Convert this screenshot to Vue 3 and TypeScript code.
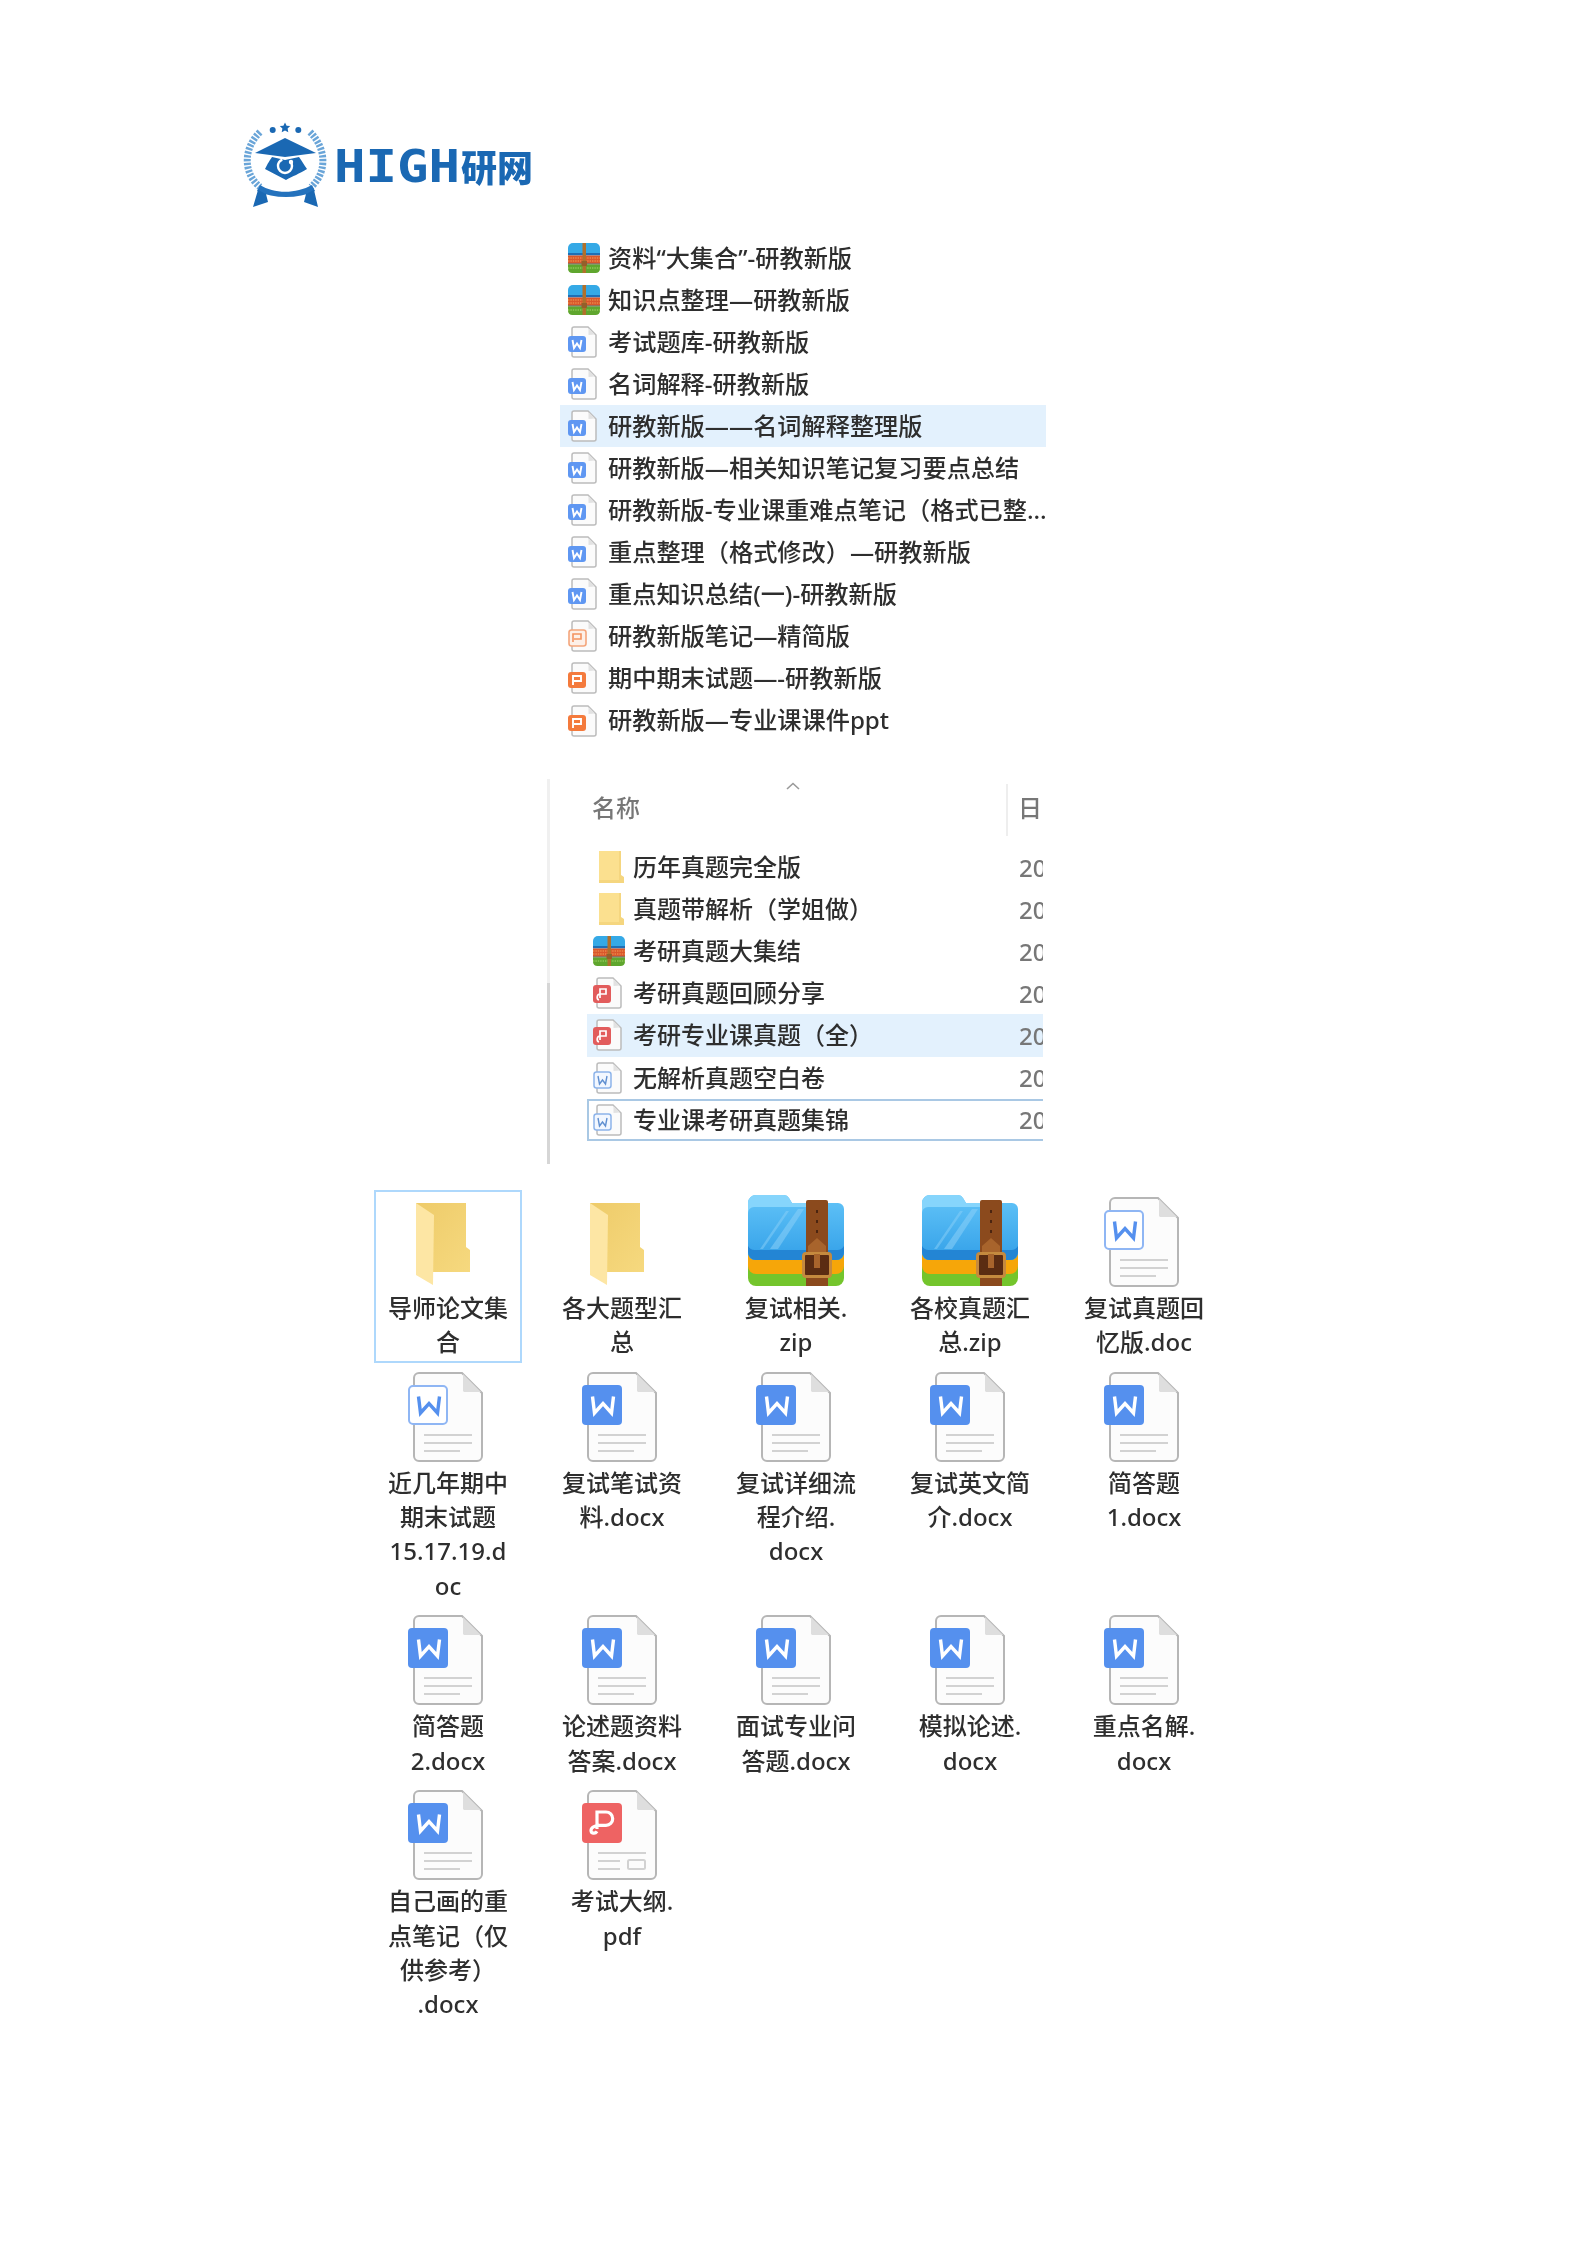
<script setup lang="ts">
interface Row {
  icon: string
  name: string
}

interface Tile {
  icon: string
  lines: string[]
  selected?: boolean
}

const topFiles: Row[] = [
  { icon: 'rar-s', name: '资料“大集合”-研教新版' },
  { icon: 'rar-s', name: '知识点整理—研教新版' },
  { icon: 'word-s', name: '考试题库-研教新版' },
  { icon: 'word-s', name: '名词解释-研教新版' },
  { icon: 'word-s', name: '研教新版——名词解释整理版' },
  { icon: 'word-s', name: '研教新版—相关知识笔记复习要点总结' },
  { icon: 'word-s', name: '研教新版-专业课重难点笔记（格式已整...' },
  { icon: 'word-s', name: '重点整理（格式修改）—研教新版' },
  { icon: 'word-s', name: '重点知识总结(一)-研教新版' },
  { icon: 'ppt-line-s', name: '研教新版笔记—精简版' },
  { icon: 'ppt-s', name: '期中期末试题—-研教新版' },
  { icon: 'ppt-s', name: '研教新版—专业课课件ppt' }
]

const examFiles: Row[] = [
  { icon: 'folder-s', name: '历年真题完全版' },
  { icon: 'folder-s', name: '真题带解析（学姐做）' },
  { icon: 'rar-s', name: '考研真题大集结' },
  { icon: 'pdf-s', name: '考研真题回顾分享' },
  { icon: 'pdf-s', name: '考研专业课真题（全）' },
  { icon: 'word-line-s', name: '无解析真题空白卷' },
  { icon: 'word-line-s', name: '专业课考研真题集锦' }
]

const tiles: Tile[] = [
  { icon: 'folder-b', lines: ['导师论文集', '合'], selected: true },
  { icon: 'folder-b', lines: ['各大题型汇', '总'] },
  { icon: 'zip-b', lines: ['复试相关.', 'zip'] },
  { icon: 'zip-b', lines: ['各校真题汇', '总.zip'] },
  { icon: 'word-line-b', lines: ['复试真题回', '忆版.doc'] },
  { icon: 'word-line-b', lines: ['近几年期中', '期末试题', '15.17.19.d', 'oc'] },
  { icon: 'word-b', lines: ['复试笔试资', '料.docx'] },
  { icon: 'word-b', lines: ['复试详细流', '程介绍.', 'docx'] },
  { icon: 'word-b', lines: ['复试英文简', '介.docx'] },
  { icon: 'word-b', lines: ['简答题', '1.docx'] },
  { icon: 'word-b', lines: ['简答题', '2.docx'] },
  { icon: 'word-b', lines: ['论述题资料', '答案.docx'] },
  { icon: 'word-b', lines: ['面试专业问', '答题.docx'] },
  { icon: 'word-b', lines: ['模拟论述.', 'docx'] },
  { icon: 'word-b', lines: ['重点名解.', 'docx'] },
  { icon: 'word-b', lines: ['自己画的重', '点笔记（仅', '供参考）', '.docx'] },
  { icon: 'pdf-b', lines: ['考试大纲.', 'pdf'] }
]

// rows that carry the pale selection colour / focus frame in the second list
const hoverRow = 4
const focusRow = 6
</script>

<template>
  <div class="page" lang="zh-CN">
    <svg class="defs" aria-hidden="true">
      <defs>
        <linearGradient id="zip-blue" x1="0" y1="0" x2="0" y2="1">
          <stop offset="0" stop-color="#62c4f8" />
          <stop offset="1" stop-color="#33a0e8" />
        </linearGradient>
        <linearGradient id="folder-back" x1="0" y1="0" x2="1" y2="1">
          <stop offset="0" stop-color="#eecb69" />
          <stop offset="1" stop-color="#f6d97f" />
        </linearGradient>
        <symbol id="paper-b" viewBox="0 0 96 96">
          <path d="M19 4H62L82 24V87a5 5 0 0 1-5 5H19a5 5 0 0 1-5-5V9a5 5 0 0 1 5-5Z" fill="#fcfcfc" stroke="#b6b6b6" stroke-width="2" />
          <path d="M63 5L81 23 64 23 63 22Z" fill="#dedede" />
        </symbol>
        <symbol id="word-b" viewBox="0 0 96 96">
          <use href="#paper-b" />
          <path d="M24 66H72M24 74H72M24 82H60" stroke="#d2d2d2" stroke-width="2" fill="none" />
          <rect x="8" y="16" width="40" height="40" rx="4" fill="#5590ee" />
          <path d="M18.5 27.5L20.5 44 29 34.5 37.5 44 39.5 27.5" fill="none" stroke="#fff" stroke-width="3.4" />
        </symbol>
        <symbol id="word-line-b" viewBox="0 0 96 96">
          <use href="#paper-b" />
          <path d="M24 66H72M24 74H72M24 82H60" stroke="#d2d2d2" stroke-width="2" fill="none" />
          <rect x="9" y="17" width="38" height="38" rx="4" fill="#fff" stroke="#8fb6f4" stroke-width="2" />
          <path d="M18.5 27.5L20.5 44 29 34.5 37.5 44 39.5 27.5" fill="none" stroke="#5590ee" stroke-width="3.4" />
        </symbol>
        <symbol id="pdf-b" viewBox="0 0 96 96">
          <use href="#paper-b" />
          <path d="M24 66H72M24 74H46M24 82H46" stroke="#d2d2d2" stroke-width="2" fill="none" />
          <rect x="54" y="73" width="17" height="9" rx="1.5" fill="none" stroke="#d2d2d2" stroke-width="2" />
          <rect x="8" y="16" width="40" height="40" rx="4" fill="#ee6363" />
          <path d="M23 42V25H32a6.7 6.7 0 0 1 0 13.4H25c-4 0-8 2-8 5s4 4 6 1" fill="none" stroke="#fff" stroke-width="3.2" />
        </symbol>
        <symbol id="folder-b" viewBox="0 0 96 96">
          <path d="M16 9H66V53L70 56V78H16Z" fill="url(#folder-back)" />
          <path d="M16 9L34 21 33 91 16 81Z" fill="#fde6a4" />
        </symbol>
        <symbol id="zip-b" viewBox="0 0 96 96">
          <path d="M0 64V84a8 8 0 0 0 8 8H88a8 8 0 0 0 8-8V64Z" fill="#74c52c" />
          <path d="M0 56V72a8 8 0 0 0 8 8H88a8 8 0 0 0 8-8V56Z" fill="#f6a609" />
          <path d="M0 9a8 8 0 0 1 8-8H36a6 6 0 0 1 5 3l3 5H90a6 6 0 0 1 6 6V60a8 8 0 0 1-8 6H8a8 8 0 0 1-8-6Z" fill="url(#zip-blue)" />
          <path d="M0 52V58a8 8 0 0 0 8 8H88a8 8 0 0 0 8-8V52a8 8 0 0 1-8 4H8a8 8 0 0 1-8-4Z" fill="#2385d4" />
          <path d="M0 9a8 8 0 0 1 8-8H36a6 6 0 0 1 5 3l3 5H58V13H6a6 6 0 0 0-6 6Z" fill="#86d5fc" />
          <path d="M22 55L50 15H56L30 55Z" fill="#8ad0f7" opacity=".55" />
          <path d="M12 55L38 17H41L15 55Z" fill="#8ad0f7" opacity=".5" />
          <path d="M58 8a2 2 0 0 1 2-2H78a2 2 0 0 1 2 2V92H58Z" fill="#8b4a1d" />
          <path d="M60 52L69 44 78 52V58H60Z" fill="#a8642c" />
          <rect x="55.5" y="59.5" width="27" height="23" rx="2.5" fill="#5b2c12" stroke="#c58a3e" stroke-width="3" />
          <rect x="66" y="60" width="6" height="14" fill="#a8642c" />
          <path d="M69 16v3M69 26v3M69 36v3" stroke="#4c2510" stroke-width="2" />
        </symbol>
        <symbol id="paper-s" viewBox="0 0 32 32">
          <path d="M6 1H20L28 9V29a2 2 0 0 1-2 2H6a2 2 0 0 1-2-2V3a2 2 0 0 1 2-2Z" fill="#fbfbfb" stroke="#bcbcbc" stroke-width="1.5" />
          <path d="M20.5 2L27 8.5 20.5 9Z" fill="#e2e2e2" />
        </symbol>
        <symbol id="word-s" viewBox="0 0 32 32">
          <use href="#paper-s" />
          <rect x="0" y="10" width="18" height="16" rx="3" fill="#5f97f2" />
          <path d="M4.5 14L6 22 9 17.5 12 22 13.5 14" fill="none" stroke="#fff" stroke-width="1.9" />
        </symbol>
        <symbol id="word-line-s" viewBox="0 0 32 32">
          <use href="#paper-s" />
          <rect x="1" y="10" width="17" height="16" rx="2.5" fill="#f2f7ff" stroke="#8db4ea" stroke-width="1.5" />
          <path d="M5 14L6.5 22 9.5 18 12.5 22 14 14" fill="none" stroke="#5f8fd0" stroke-width="1.4" />
        </symbol>
        <symbol id="ppt-s" viewBox="0 0 32 32">
          <use href="#paper-s" />
          <rect x="0" y="10" width="18" height="16" rx="3" fill="#f47a3c" />
          <path d="M5 23V14H13V19H6" fill="none" stroke="#fff" stroke-width="1.9" />
        </symbol>
        <symbol id="ppt-line-s" viewBox="0 0 32 32">
          <use href="#paper-s" />
          <rect x="1" y="10" width="17" height="16" rx="2.5" fill="#fdf0e8" stroke="#f4a67c" stroke-width="1.6" />
          <path d="M5 22V14H13V19H6" fill="none" stroke="#f4935f" stroke-width="1.6" />
        </symbol>
        <symbol id="pdf-s" viewBox="0 0 32 32">
          <use href="#paper-s" />
          <rect x="0" y="8" width="18" height="18" rx="3" fill="#e25c5c" />
          <path d="M7 21V12H13V17H7C4 17 3 22 6 23" fill="none" stroke="#fff" stroke-width="1.7" />
        </symbol>
        <symbol id="folder-s" viewBox="0 0 32 32">
          <path d="M6 0H28V24L31 26V32H6Z" fill="#f5d67f" />
          <path d="M6 0H26V29H6Z" fill="#fbe08f" />
        </symbol>
        <symbol id="rar-s" viewBox="0 0 32 32">
          <path d="M0 6a5 5 0 0 1 5-5H27a5 5 0 0 1 5 5V13H0Z" fill="#35a9e6" />
          <rect x="0" y="11" width="32" height="2.5" fill="#1f6fb5" />
          <rect x="0" y="13.5" width="32" height="8" fill="#d9572b" />
          <path d="M0 16H32M0 19H32" stroke="#f2a25a" stroke-width="1.1" stroke-dasharray="1.4 1" />
          <rect x="0" y="21.5" width="32" height="1" fill="#3a3a2a" />
          <path d="M0 22.5H32V27a4.5 4.5 0 0 1-4.5 4H4.5a4.5 4.5 0 0 1-4.5-4Z" fill="#5fa62e" />
          <path d="M0 26H32" stroke="#a6d66c" stroke-width="1" stroke-dasharray="1.4 1" />
          <rect x="14.5" y="1" width="3.5" height="30" fill="#b0702c" />
          <rect x="13.5" y="19" width="5.5" height="5" fill="#94602a" />
        </symbol>
      </defs>
    </svg>

    <svg class="logo" viewBox="0 0 290 85" role="img" aria-label="HIGH研网">
      <path d="M41 0.5l1.6 3.2 3.6.4-2.6 2.5.7 3.6-3.3-1.7-3.3 1.7.7-3.6-2.6-2.5 3.6-.4Z" fill="#1a68b3" />
      <circle cx="28.7" cy="8" r="3" fill="#1a68b3" />
      <circle cx="54.3" cy="8" r="3" fill="#1a68b3" />
      <path d="M16 10C-2 28 0 52 16 65" fill="none" stroke="#6aa5d8" stroke-width="7" stroke-dasharray="2.4 1.4" />
      <path d="M66 10C84 28 82 52 67 65" fill="none" stroke="#6aa5d8" stroke-width="7" stroke-dasharray="2.4 1.4" />
      <path d="M11 31L41 16 72 31 41 35Z" fill="#1a68b3" />
      <path d="M21 47C24 41 26 38 28 35L41 38 55 35C58 39 60 43 63 47 55 52 49 54 42 58 35 54 28 51 21 47Z" fill="#1a68b3" />
      <circle cx="41" cy="44" r="7" fill="none" stroke="#fff" stroke-width="2.4" stroke-dasharray="30 8" />
      <circle cx="47" cy="40" r="2.2" fill="#fff" />
      <path d="M16 63C30 72 52 72 68 63L71 69C54 77 30 77 13 69Z" fill="#2472bd" />
      <path d="M14 68L9 85 24 80 22 72ZM70 68L74 85 60 80 62 72Z" fill="#1a68b3" />
      <text class="logo-latin" x="90" y="60" textLength="126" lengthAdjust="spacingAndGlyphs">HIGH</text>
      <text class="logo-cjk" x="217" y="60" textLength="72" lengthAdjust="spacingAndGlyphs">研网</text>
    </svg>

    <ul class="file-list">
      <li v-for="(row, i) in topFiles" :key="row.name" class="file-row" :class="{ active: i === 4 }">
        <svg class="small-icon"><use :href="`#${row.icon}`" /></svg>
        <span class="file-name">{{ row.name }}</span>
      </li>
    </ul>

    <section class="explorer">
      <header class="explorer-head">
        <span class="col-name">名称</span>
        <svg class="sort-caret" viewBox="0 0 14 8"><path d="M1 7L7 1.5 13 7" fill="none" stroke="#9a9a9a" stroke-width="1.6" /></svg>
        <span class="col-date">日</span>
      </header>
      <ul class="exam-list">
        <li
          v-for="(row, i) in examFiles"
          :key="row.name"
          class="exam-row"
          :class="{ active: i === hoverRow, focused: i === focusRow }"
        >
          <svg class="small-icon"><use :href="`#${row.icon}`" /></svg>
          <span class="file-name">{{ row.name }}</span>
          <span class="file-date">20</span>
        </li>
      </ul>
    </section>

    <div class="tile-grid">
      <div v-for="(tile, i) in tiles" :key="i" class="tile" :class="{ selected: tile.selected }">
        <svg class="big-icon"><use :href="`#${tile.icon}`" /></svg>
        <div class="tile-label">
          <div v-for="line in tile.lines" :key="line">{{ line }}</div>
        </div>
      </div>
    </div>
  </div>
</template>

<style>
html,
body {
  background: #fff;
}
</style>

<style scoped>
.page {
  width: 1587px;
  height: 2245px;
  box-sizing: border-box;
  padding-top: 122px;
  background: #fff;
  color: #2e2e2e;
  font-family: "Noto Sans", "Noto Sans CJK SC", sans-serif;
  font-size: 24px;
  font-weight: 500;
  overflow: hidden;
  filter: blur(0.5px);
}

.defs {
  display: block;
  width: 0;
  height: 0;
}

.logo {
  display: block;
  width: 290px;
  height: 85px;
  margin-left: 244px;
  overflow: visible;
}

.logo-latin {
  font-family: "DejaVu Sans Mono", monospace;
  font-weight: 700;
  font-size: 44px;
  fill: #1a68b3;
}

.logo-cjk {
  font-family: "Noto Sans CJK SC", sans-serif;
  font-weight: 900;
  font-size: 37px;
  fill: #1a68b3;
}

ul {
  list-style: none;
  margin: 0;
  padding: 0;
}

.file-list {
  width: 486px;
  margin: 30px 0 0 560px;
  font-size: 24.2px;
}

.file-row {
  display: flex;
  align-items: center;
  gap: 8px;
  height: 42.05px;
  padding-left: 8px;
  white-space: nowrap;
}

.active {
  background: #e3f1fd;
}

.small-icon {
  flex: none;
  width: 32px;
  height: 32px;
}

.file-name {
  line-height: 1;
}

.explorer {
  width: 496px;
  height: 385px;
  box-sizing: border-box;
  margin: 37px 0 0 547px;
  border-left: 3px solid;
  border-image: linear-gradient(#f0f0f0 53%, #d6d6d6 53%) 1;
  overflow: hidden;
}

.explorer-head {
  position: relative;
  display: flex;
  justify-content: space-between;
  align-items: center;
  box-sizing: border-box;
  height: 67.5px;
  padding: 0 1px 12px 42px;
  color: #777;
}

.sort-caret {
  position: absolute;
  left: 236px;
  top: 3px;
  width: 14px;
  height: 8px;
}

.col-date {
  align-self: flex-start;
  width: 36px;
  height: 52px;
  box-sizing: border-box;
  margin-top: 5px;
  padding-left: 10px;
  line-height: 48px;
  border-left: 2px solid #eee;
}

.exam-list {
  margin-left: 37px;
}

.exam-row {
  display: flex;
  align-items: center;
  gap: 8px;
  height: 42.1px;
  box-sizing: border-box;
  padding-left: 6px;
  white-space: nowrap;
}

.exam-row.focused {
  border: 2px solid #a9c8e4;
  border-right: none;
  padding-left: 4px;
}

.file-date {
  flex: none;
  margin-left: auto;
  width: 24px;
  overflow: hidden;
  color: #777;
}

.tile-grid {
  display: grid;
  grid-template-columns: repeat(5, 148px);
  column-gap: 26px;
  margin: 26px 0 0 374px;
}

.tile {
  box-sizing: border-box;
  padding: 4px 0 5.5px;
  text-align: center;
}

.tile.selected {
  align-self: start;
  height: 173px;
  box-shadow: inset 0 0 0 2px #aed8fc;
}

.big-icon {
  display: block;
  width: 96px;
  height: 96px;
  margin: 0 auto 1px;
}

.tile-label {
  line-height: 34.3px;
  white-space: nowrap;
}
</style>
